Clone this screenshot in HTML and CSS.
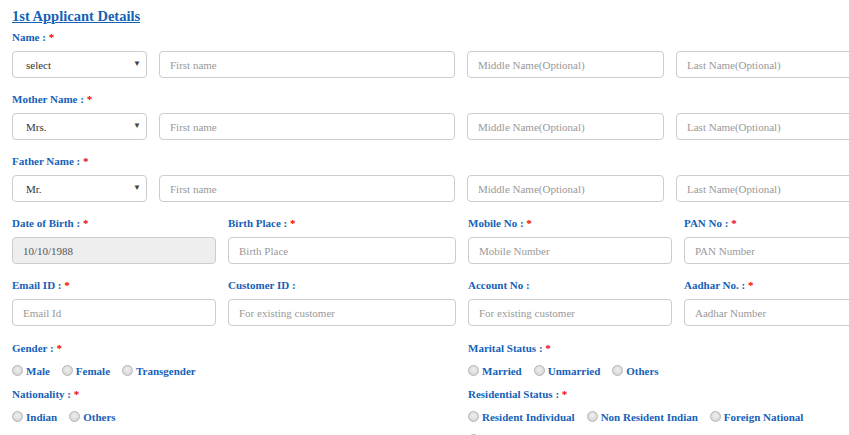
FILE: index.html
```html
<!DOCTYPE html>
<html>
<head>
<meta charset="utf-8">
<link rel="stylesheet" href="styles.css">
</head>
<body>
<div class="page">
  <h2 class="title">1st Applicant Details</h2>

  <div class="block">
    <div class="label">Name : <span class="req">*</span></div>
    <div class="name-row">
      <div class="select-wrap"><select class="ctl sel"><option>select</option></select><span class="arrow">&#9660;</span></div>
      <input class="ctl" placeholder="First name">
      <input class="ctl" placeholder="Middle Name(Optional)">
      <input class="ctl" placeholder="Last Name(Optional)">
    </div>
  </div>

  <div class="block">
    <div class="label">Mother Name : <span class="req">*</span></div>
    <div class="name-row">
      <div class="select-wrap"><select class="ctl sel"><option>Mrs.</option></select><span class="arrow">&#9660;</span></div>
      <input class="ctl" placeholder="First name">
      <input class="ctl" placeholder="Middle Name(Optional)">
      <input class="ctl" placeholder="Last Name(Optional)">
    </div>
  </div>

  <div class="block">
    <div class="label">Father Name : <span class="req">*</span></div>
    <div class="name-row">
      <div class="select-wrap"><select class="ctl sel"><option>Mr.</option></select><span class="arrow">&#9660;</span></div>
      <input class="ctl" placeholder="First name">
      <input class="ctl" placeholder="Middle Name(Optional)">
      <input class="ctl" placeholder="Last Name(Optional)">
    </div>
  </div>

  <div class="block info-row">
    <div class="cell"><div class="label">Date of Birth : <span class="req">*</span></div><input class="ctl ro" value="10/10/1988" readonly></div>
    <div class="cell"><div class="label">Birth Place : <span class="req">*</span></div><input class="ctl" placeholder="Birth Place"></div>
    <div class="cell"><div class="label">Mobile No : <span class="req">*</span></div><input class="ctl" placeholder="Mobile Number"></div>
    <div class="cell"><div class="label">PAN No : <span class="req">*</span></div><input class="ctl" placeholder="PAN Number"></div>
  </div>

  <div class="block info-row">
    <div class="cell"><div class="label">Email ID : <span class="req">*</span></div><input class="ctl" placeholder="Email Id"></div>
    <div class="cell"><div class="label">Customer ID :</div><input class="ctl" placeholder="For existing customer"></div>
    <div class="cell"><div class="label">Account No :</div><input class="ctl" placeholder="For existing customer"></div>
    <div class="cell"><div class="label">Aadhar No. : <span class="req">*</span></div><input class="ctl" placeholder="Aadhar Number"></div>
  </div>

  <div class="radio-area">
    <div class="radio-col">
      <div class="label">Gender : <span class="req">*</span></div>
      <div class="opts">
        <label class="opt"><input type="radio" name="g">Male</label>
        <label class="opt"><input type="radio" name="g">Female</label>
        <label class="opt"><input type="radio" name="g">Transgender</label>
      </div>
      <div class="label">Nationality : <span class="req">*</span></div>
      <div class="opts">
        <label class="opt"><input type="radio" name="n">Indian</label>
        <label class="opt"><input type="radio" name="n">Others</label>
      </div>
    </div>
    <div class="radio-col">
      <div class="label">Marital Status : <span class="req">*</span></div>
      <div class="opts">
        <label class="opt"><input type="radio" name="m">Married</label>
        <label class="opt"><input type="radio" name="m">Unmarried</label>
        <label class="opt"><input type="radio" name="m">Others</label>
      </div>
      <div class="label">Residential Status : <span class="req">*</span></div>
      <div class="opts wrap">
        <label class="opt"><input type="radio" name="r">Resident Individual</label>
        <label class="opt"><input type="radio" name="r">Non Resident Indian</label>
        <label class="opt"><input type="radio" name="r">Foreign National</label>
        <label class="opt"><input type="radio" name="r">Person of Indian Origin</label>
      </div>
    </div>
  </div>
</div>
</body>
</html>
```

FILE: styles.css
```css
html, body {
  margin: 0;
  padding: 0;
  background: #fff;
  overflow: hidden;
}
body {
  font-family: "Liberation Serif", "Times New Roman", serif;
  color: #1661b8;
}
.page {
  width: 899px;
  padding: 7px 12px 0 12px;
}
.title {
  margin: 0 0 5px 0;
  font-size: 14.5px;
  line-height: 18px;
  font-weight: bold;
  text-decoration: underline;
  color: #1661b8;
}
.label {
  font-size: 11px;
  line-height: 14px;
  font-weight: bold;
  color: #1661b8;
  margin-bottom: 7px;
}
.req {
  color: #ee0000;
}
.block {
  margin-bottom: 14px;
}
.name-row {
  display: grid;
  grid-template-columns: 135px 296px 197px 234px;
  column-gap: 12px;
}
.info-row {
  display: grid;
  grid-template-columns: 204px 228px 204px 227px;
  column-gap: 12px;
}
.ctl {
  box-sizing: border-box;
  width: 100%;
  height: 27px;
  margin: 0;
  border: 1px solid #cccccc;
  border-radius: 4px;
  padding: 0 10px;
  font-family: "Liberation Serif", "Times New Roman", serif;
  font-size: 11px;
  color: #555;
  background: #fff;
  outline: none;
}
.ctl::placeholder {
  color: #999;
  font-family: "Liberation Serif", "Times New Roman", serif;
}
.ro {
  background: #eeeeee;
}
.select-wrap {
  position: relative;
}
.sel {
  appearance: none;
  -webkit-appearance: none;
  padding-left: 13px;
  color: #333;
}
.arrow {
  position: absolute;
  right: 6px;
  top: 8px;
  font-size: 8px;
  line-height: 10px;
  color: #444;
  pointer-events: none;
}
.radio-area {
  display: grid;
  grid-template-columns: 456px 443px;
  padding-top: 1px;
}
.radio-col .label {
  margin-bottom: 9px;
}
.opts {
  display: flex;
  gap: 12px;
  font-size: 11px;
  line-height: 14px;
  font-weight: bold;
  margin-bottom: 9px;
}
.opts.wrap {
  flex-wrap: wrap;
  row-gap: 9px;
}
.opt {
  display: flex;
  align-items: center;
  gap: 3px;
  color: #1661b8;
}
.opt input {
  appearance: none;
  -webkit-appearance: none;
  flex: none;
  width: 11px;
  height: 11px;
  margin: 0 0 2px 0;
  border: 1px solid #b5b5b5;
  border-radius: 50%;
  background: radial-gradient(circle at 50% 40%, #f0f0f0 0%, #d8d8d8 70%, #cfcfcf 100%);
  box-sizing: border-box;
}
```
